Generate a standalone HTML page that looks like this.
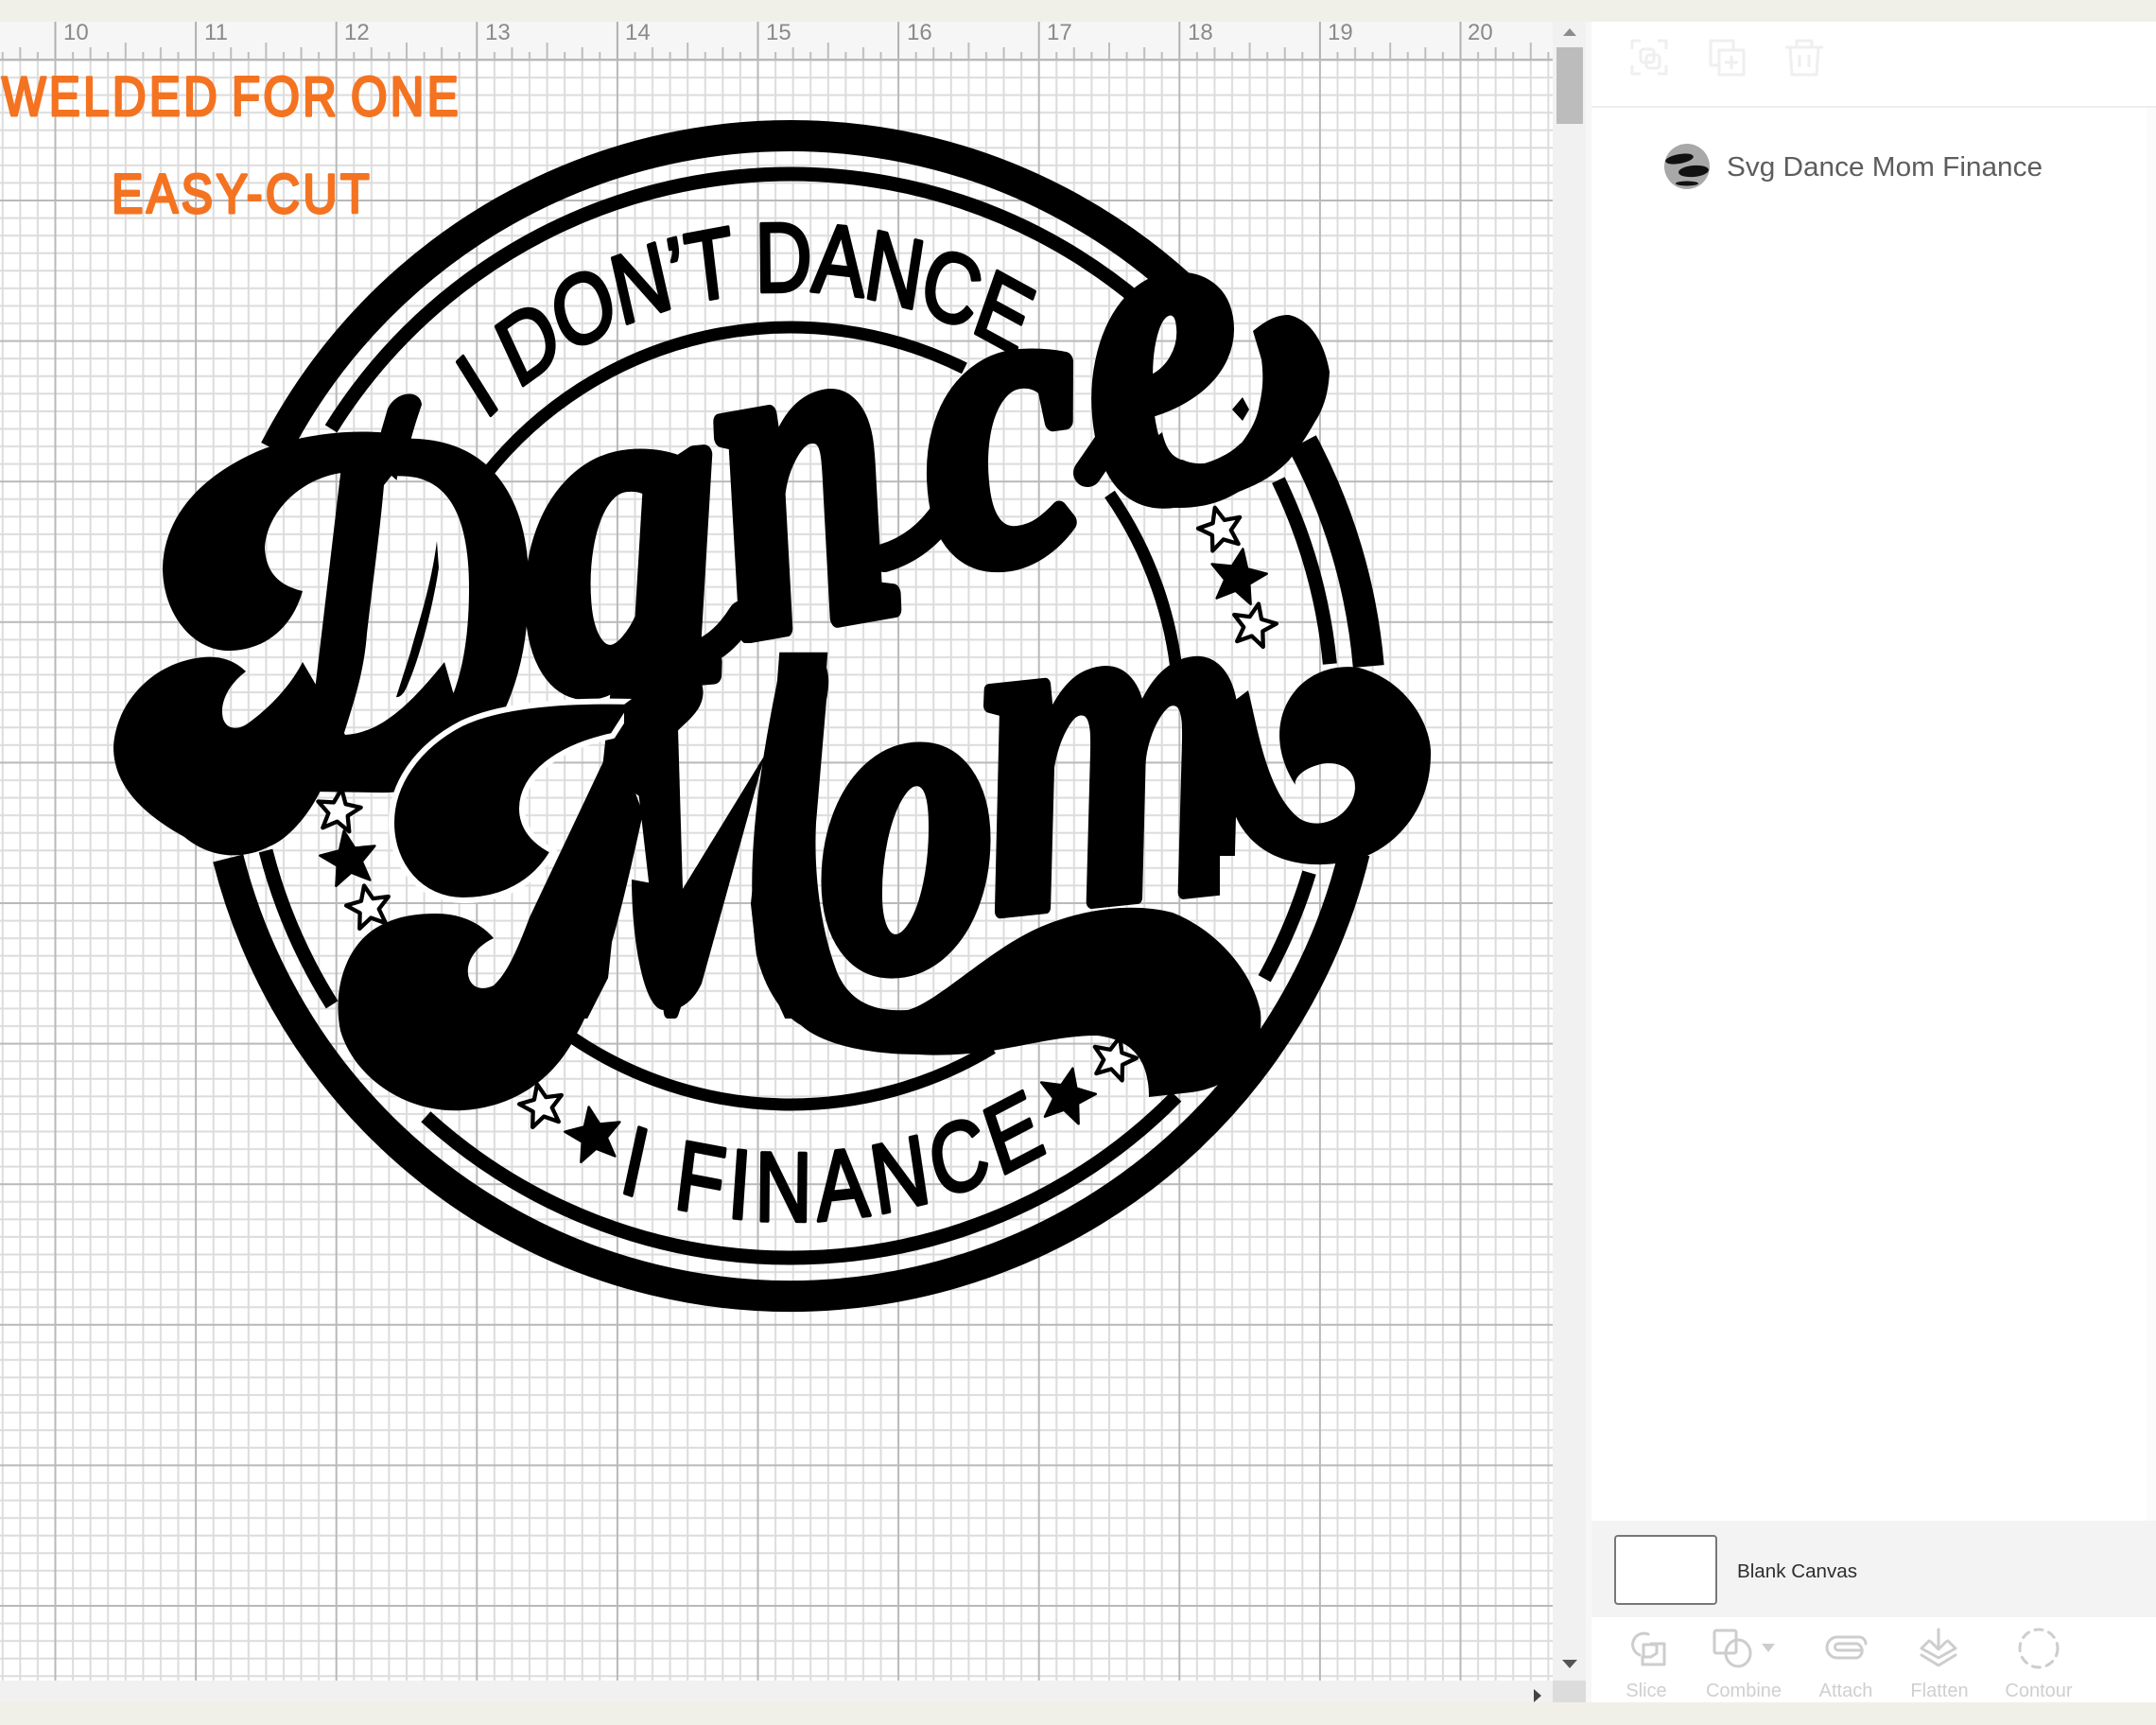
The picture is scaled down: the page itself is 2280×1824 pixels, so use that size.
<!DOCTYPE html>
<html lang="en"><head><meta charset="utf-8"><title>Svg Dance Mom Finance</title>
<style>
html,body{margin:0;padding:0;background:#f1f0e8}
svg{display:block}
.sc{font-family:"Liberation Serif",serif;font-style:italic;font-weight:700;fill:#000;stroke:#000;stroke-linejoin:round}
.cond{font-family:"Liberation Sans",sans-serif;font-size:104px;fill:#000;stroke:#000;stroke-width:4;stroke-linejoin:round}
.or{font-family:"Liberation Sans",sans-serif;fill:#f47321;stroke:#f47321;stroke-width:3;stroke-linejoin:round;letter-spacing:4px;word-spacing:-6px}
.rn{font-family:"Liberation Sans",sans-serif;font-size:24px;fill:#8a8a8a}
.lb{font-family:"Liberation Sans",sans-serif;font-size:20px;fill:#cfcfcf;text-anchor:middle}
.ic{fill:none;stroke:#cdcdcd;stroke-width:3;stroke-linejoin:round;stroke-linecap:round}
.it{fill:none;stroke:#efefef;stroke-width:3;stroke-linejoin:round}
.ring{fill:none;stroke:#000}
</style></head><body>
<svg xmlns="http://www.w3.org/2000/svg" width="2280" height="1824" viewBox="0 0 2280 1824">
<defs>
<pattern id="g" patternUnits="userSpaceOnUse" x="57.5" y="62.4" width="148.6" height="148.6">
<rect width="148.6" height="148.6" fill="#fff"/>
<g fill="#dcdcdc">
<rect x="18.6" width="2" height="148.6"/><rect x="37.15" width="2" height="148.6"/><rect x="55.7" width="2" height="148.6"/><rect x="74.3" width="2" height="148.6"/><rect x="92.9" width="2" height="148.6"/><rect x="111.45" width="2" height="148.6"/><rect x="130" width="2" height="148.6"/>
<rect y="18.6" width="148.6" height="2"/><rect y="37.15" width="148.6" height="2"/><rect y="55.7" width="148.6" height="2"/><rect y="74.3" width="148.6" height="2"/><rect y="92.9" width="148.6" height="2"/><rect y="111.45" width="148.6" height="2"/><rect y="130" width="148.6" height="2"/>
</g>
<rect width="2" height="148.6" fill="#b9b9b9"/><rect width="148.6" height="2" fill="#b9b9b9"/>
</pattern>
<pattern id="t" patternUnits="userSpaceOnUse" x="57.5" y="23" width="148.6" height="41">
<rect width="2" height="41" fill="#b0b0b0"/>
<g fill="#bdbdbd">
<rect x="18.6" y="32" width="2" height="9"/><rect x="37.15" y="27" width="2" height="14"/><rect x="55.7" y="32" width="2" height="9"/><rect x="74.3" y="22" width="2" height="19"/><rect x="92.9" y="32" width="2" height="9"/><rect x="111.45" y="27" width="2" height="14"/><rect x="130" y="32" width="2" height="9"/>
</g>
</pattern>
<polygon id="s" points="0,-1 .265,-.364 .951,-.309 .428,.139 .588,.809 0,.45 -.588,.809 -.428,.139 -.951,-.309 -.265,-.364"/>
<path id="topArc" d="M-403.6 -312A561 449 0 0 1 280.5 -388.8"/>
<path id="botArc" d="M-228.3 501.8A667.5 534 0 0 0 343.8 457.7"/>
</defs>

<rect width="2280" height="1824" fill="#f1f0e8"/>
<!-- canvas -->
<rect x="0" y="63" width="1642" height="1714" fill="url(#g)"/>
<rect x="0" y="23" width="1642" height="40" fill="#f6f6f7"/>
<rect x="0" y="23" width="1642" height="41" fill="url(#t)"/>
<rect x="0" y="62" width="1642" height="2" fill="#b9b9b9"/>
<g class="rn">
<text x="67" y="42">10</text><text x="216" y="42">11</text><text x="364" y="42">12</text><text x="513" y="42">13</text><text x="661" y="42">14</text><text x="810" y="42">15</text><text x="959" y="42">16</text><text x="1107" y="42">17</text><text x="1256" y="42">18</text><text x="1404" y="42">19</text><text x="1552" y="42">20</text>
</g>
<!-- scrollbars -->
<rect x="1642" y="23" width="35" height="1777" fill="#f1f1f1"/>
<rect x="1646" y="50" width="28" height="81" fill="#bcbcbc"/>
<polygon points="1653,38 1667,38 1660,30" fill="#8c8c8c"/>
<polygon points="1652,1755 1668,1755 1660,1764" fill="#555"/>
<rect x="0" y="1777" width="1642" height="23" fill="#f1f1f1"/>
<rect x="1642" y="1777" width="35" height="23" fill="#dcdcdc"/>
<polygon points="1622,1786 1622,1800 1630,1793" fill="#444"/>
<rect x="1677" y="23" width="6" height="1777" fill="#f7f7f7"/>

<!-- orange -->
<text class="or" x="2" y="122" font-size="58" textLength="486" lengthAdjust="spacingAndGlyphs">WELDED FOR ONE</text>
<text class="or" x="118" y="225" font-size="58" textLength="276" lengthAdjust="spacingAndGlyphs">EASY-CUT</text>

<!-- Dance : real text -->
<g class="sc">
<text font-size="555" stroke-width="10" transform="translate(296 832) scale(.67 1)">D</text>
<text font-size="500" stroke-width="20" transform="translate(566 730) rotate(-5) scale(.84 1)">a</text>
<text font-size="490" stroke-width="20" transform="translate(782 672) rotate(-10) scale(.68 1)">n</text>
<text font-size="440" stroke-width="20" transform="translate(995 600) rotate(-8) scale(.85 1)">c</text>
<text font-size="470" stroke-width="20" transform="translate(1170 535) rotate(-10) scale(.8 1)">e</text>
</g>
<!-- Mom : real text -->
<g class="sc">
<text font-size="570" stroke-width="14" transform="translate(590 1070) scale(.6 1)">M</text>
<text font-size="470" stroke-width="24" transform="translate(872 1018) scale(.76 1)">o</text>
<text font-size="510" stroke-width="14" transform="translate(1050 965) rotate(-6) scale(.74 1)">m</text>
</g>

<!-- background-coloured trims that shape the letter counters -->
<g fill="url(#g)">
<path d="M414 503C440 525 470 555 480 590C488 630 478 670 460 705C440 745 400 775 363 778C375 740 385 710 388 670C395 610 402 560 406 513Z"/>
<path d="M360 500C335 505 310 520 300 535C285 560 280 585 290 605C300 618 310 622 319 623C330 580 345 530 360 500Z"/>
<path d="M742 745L717 770L722 940L809 798L822 745Z"/>
<path d="M809 800L745 1045L720 1110L845 1110L800 1010L790 920Z"/>
<path d="M668 985L612 1095L600 1120L700 1110L700 1068Z"/>
<path d="M1225 452C1240 460 1275 445 1292 427C1305 410 1312 395 1314 377L1334 380C1336 410 1325 452 1314 467C1300 480 1285 490 1274 490C1250 492 1232 478 1225 452Z"/>
<path d="M876 680L912 680L912 735L880 790L868 790Z"/>
<path d="M780 680L825 680L820 745L780 745Z"/>
<path d="M1290 905L1340 905L1340 955L1290 955Z"/>
</g>

<!-- decorative swashes -->
<g fill="#000">
<path d="M426 460C380 452 320 458 273 477C220 500 174 540 172 600C172 650 205 690 245 688C285 686 310 660 320 625C300 620 282 610 280 580C282 540 320 505 362 500L411 503Z"/>
<path d="M215 695C235 693 250 700 260 710C240 725 232 745 236 760C240 772 252 772 262 765C290 745 310 720 320 700L365 777C400 775 430 750 470 700L490 770C470 810 440 836 405 838C380 838 360 832 345 822C335 850 310 885 285 895C260 908 225 910 195 885C150 860 120 830 120 790C122 745 160 700 215 695Z"/>
<path d="M396 480L410 432C420 412 445 412 446 428C440 445 432 470 428 495Z"/>
<path d="M462 572C456 620 442 660 434 690L419 737C423 738 428 733 432 722C446 690 460 630 464 600Z"/>
<path d="M1325 350C1340 338 1350 333 1363 333C1385 338 1400 360 1406 393C1405 415 1400 432 1390 447C1380 465 1370 478 1363 487C1345 505 1330 512 1310 520C1290 532 1270 537 1247 537C1225 537 1205 530 1194 527L1200 480L1229 457C1232 470 1236 478 1243 483C1255 490 1265 492 1274 490C1290 485 1305 477 1314 467C1325 452 1330 440 1332 427C1336 410 1336 395 1334 380Z"/>
<polygon points="1314,420 1321,433 1314,445 1303,433"/>
</g>
<g fill="none" stroke="#000" stroke-linecap="round">
<path stroke-width="30" d="M725 695Q760 690 785 650"/>
<path stroke-width="30" d="M935 590Q975 578 1000 540"/>
<path stroke-width="30" d="M1150 500L1172 468"/>
</g>
<g fill="#000" stroke="#fff" stroke-width="0">
<path stroke-width="6" d="M671 742C600 740 530 745 488 765C440 790 414 830 414 870C414 915 445 952 490 952C530 952 565 935 585 900C565 890 552 875 552 855C552 820 590 790 648 778Z"/>
<path d="M461 966C490 966 510 978 522 992C505 1000 493 1015 495 1030C497 1045 510 1048 522 1042C535 1030 545 1010 560 970L650 780L680 860C660 950 640 1040 610 1093C590 1135 550 1170 490 1174C430 1178 375 1140 360 1090C350 1040 370 990 410 975C425 968 445 966 461 966Z"/>
<path d="M660 745C680 730 705 712 725 712C745 712 748 735 738 750C730 762 720 768 715 775L700 860L660 830Z"/>
<path d="M668 930C668 990 680 1068 702 1068C722 1070 735 1055 742 1040L809 798L722 940Z"/>
<path d="M822 720C830 695 850 688 862 692C878 700 878 720 874 740L863 870C860 930 870 990 886 1030C900 1060 925 1070 960 1068C990 1060 1040 1010 1090 985C1130 965 1190 952 1240 965C1290 985 1325 1030 1333 1070C1338 1120 1300 1150 1260 1155L1215 1160C1215 1130 1205 1100 1160 1095C1100 1095 1050 1120 970 1115C920 1115 870 1105 847 1084C830 1075 810 1050 800 1010C788 920 800 830 822 720Z"/>
<path d="M1437 706C1490 720 1515 770 1513 800C1512 860 1470 905 1420 912C1370 920 1330 905 1310 870C1295 840 1285 800 1280 760L1320 730C1330 770 1340 840 1375 866C1400 880 1430 860 1433 835C1435 810 1410 802 1390 810C1375 815 1368 825 1370 830C1350 800 1345 760 1370 730C1385 712 1410 702 1437 706Z"/>
</g>

<!-- rings -->
<g class="ring" stroke-width="33">
<circle cx="836" cy="757" r="613.5" pathLength="360" stroke-dasharray="107.2 360" transform="rotate(-152.7 836 757)"/>
<circle cx="836" cy="757" r="613.5" pathLength="360" stroke-dasharray="23.2 360" transform="rotate(-28.1 836 757)"/>
<circle cx="836" cy="757" r="613.5" pathLength="360" stroke-dasharray="152.2 360" transform="rotate(13.6 836 757)"/>
</g>
<g class="ring" stroke-width="15">
<circle cx="836" cy="757" r="573" pathLength="360" stroke-dasharray="98.3 360" transform="rotate(-148 836 757)"/>
<circle cx="836" cy="757" r="573" pathLength="360" stroke-dasharray="20.3 360" transform="rotate(-25.8 836 757)"/>
<circle cx="836" cy="757" r="573" pathLength="360" stroke-dasharray="12.2 360" transform="rotate(16.8 836 757)"/>
<circle cx="836" cy="757" r="573" pathLength="360" stroke-dasharray="87.7 360" transform="rotate(44.6 836 757)"/>
<circle cx="836" cy="757" r="573" pathLength="360" stroke-dasharray="17.8 360" transform="rotate(-212.2 836 757)"/>
</g>
<g class="ring" stroke-width="13">
<circle cx="836" cy="757" r="411" pathLength="360" stroke-dasharray="78.2 360" transform="rotate(-141.6 836 757)"/>
<circle cx="836" cy="757" r="411" pathLength="360" stroke-dasharray="30.8 360" transform="rotate(-34.8 836 757)"/>
<circle cx="836" cy="757" r="411" pathLength="360" stroke-dasharray="65.4 360" transform="rotate(58.7 836 757)"/>
</g>

<!-- arc wording -->
<g transform="translate(836 757) scale(.8 1)">
<text class="cond"><textPath href="#topArc" textLength="745" lengthAdjust="spacing">I DON’T DANCE</textPath></text>
<text class="cond"><textPath href="#botArc" textLength="582" lengthAdjust="spacing">I FINANCE</textPath></text>
</g>

<!-- stars -->
<g fill="#fff" stroke="#000" stroke-width=".18" stroke-linejoin="round">
<use href="#s" transform="translate(1291 560) rotate(-15) scale(24)"/>
<use href="#s" transform="translate(1326 662) rotate(12) scale(24)"/>
<use href="#s" transform="translate(358 858) rotate(8) scale(24)"/>
<use href="#s" transform="translate(390 960) rotate(-12) scale(24)"/>
<use href="#s" transform="translate(573 1170) rotate(-12) scale(24)"/>
<use href="#s" transform="translate(1178 1120) rotate(15) scale(24)"/>
</g>
<g fill="#000" stroke="#000" stroke-width=".08" stroke-linejoin="round">
<use href="#s" transform="translate(1309 611) rotate(10) scale(31)"/>
<use href="#s" transform="translate(369 909) rotate(-10) scale(31)"/>
<use href="#s" transform="translate(628 1201) rotate(-10) scale(31)"/>
<use href="#s" transform="translate(1128 1160) rotate(12) scale(31)"/>
</g>

<!-- side panel -->
<rect x="1683" y="23" width="597" height="1777" fill="#fff"/>
<rect x="1683" y="112" width="597" height="2" fill="#eee"/>
<rect x="2270" y="114" width="10" height="1494" fill="#fbfbfb"/>
<g class="it">
<path d="M1726 52V43H1735M1753 43H1762V52M1762 69V78H1753M1735 78H1726V69"/>
<rect x="1735" y="52" width="14" height="14" rx="3"/><rect x="1741" y="58" width="14" height="14" rx="3"/>
<path d="M1818 69H1809V43H1833V53"/><rect x="1818" y="53" width="26" height="26"/><path d="M1831 59V73M1824 66H1838"/>
<path d="M1888 50H1928M1900 50V43H1916V50M1893 50L1895 79H1921L1923 50M1903 58V71M1913 58V71"/>
</g>
<circle cx="1784" cy="176" r="24" fill="#a8a8a8"/>
<g fill="#111"><ellipse cx="1776" cy="168" rx="15" ry="5" transform="rotate(-10 1776 168)"/><ellipse cx="1791" cy="181" rx="16" ry="6" transform="rotate(-5 1791 181)"/><ellipse cx="1784" cy="194" rx="12" ry="2.5"/></g>
<text x="1826" y="186" font-family="'Liberation Sans',sans-serif" font-size="29" fill="#5d5d5d" textLength="334" lengthAdjust="spacingAndGlyphs">Svg Dance Mom Finance</text>

<rect x="1683" y="1608" width="597" height="102" fill="#f3f3f3"/>
<rect x="1708" y="1624" width="107" height="72" rx="3" fill="#fff" stroke="#777" stroke-width="2"/>
<text x="1837" y="1668" font-family="'Liberation Sans',sans-serif" font-size="20" fill="#2e2e2e" textLength="127" lengthAdjust="spacingAndGlyphs">Blank Canvas</text>

<g class="ic">
<path d="M1743 1728A11 11 0 0 0 1734 1750M1746 1738H1760V1760H1737V1752"/><path d="M1738 1739H1752V1748L1746 1752H1738Z"/>
<rect x="1813" y="1724" width="23" height="24" rx="2"/><ellipse cx="1838" cy="1748" rx="13" ry="14"/>
<path d="M1973 1738a7 7 0 0 0 -7 -7H1943a11 11 0 0 0 0 22H1964a8 8 0 0 0 0-15H1944a3.5 3.5 0 0 0 0 7H1968"/>
<path d="M2050 1723V1744M2042 1736L2050 1744L2058 1736M2040 1735L2032 1743L2050 1753L2068 1743L2060 1735M2032 1750L2050 1761L2068 1750"/>
<ellipse cx="2156" cy="1743" rx="20" ry="20" stroke-dasharray="8 7"/>
</g>
<polygon points="1863,1738 1877,1738 1870,1747" fill="#cdcdcd"/>
<g class="lb">
<text x="1741" y="1794">Slice</text><text x="1844" y="1794">Combine</text><text x="1952" y="1794">Attach</text><text x="2051" y="1794">Flatten</text><text x="2156" y="1794">Contour</text>
</g>
<rect x="0" y="1800" width="2280" height="24" fill="#f1f0e8"/>
<rect x="0" y="0" width="2280" height="23" fill="#f1f0e8"/>
</svg>
</body></html>
